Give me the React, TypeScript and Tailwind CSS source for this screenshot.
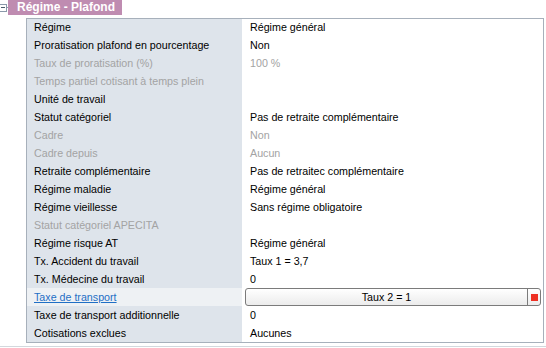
type Row = {
  label: string;
  value?: string;
  dim?: boolean;
  link?: boolean;
  button?: boolean;
};

const rows: Row[] = [
  { label: "Régime", value: "Régime général" },
  { label: "Proratisation plafond en pourcentage", value: "Non" },
  { label: "Taux de proratisation (%)", value: "100 %", dim: true },
  { label: "Temps partiel cotisant à temps plein", dim: true },
  { label: "Unité de travail" },
  { label: "Statut catégoriel", value: "Pas de retraite complémentaire" },
  { label: "Cadre", value: "Non", dim: true },
  { label: "Cadre depuis", value: "Aucun", dim: true },
  { label: "Retraite complémentaire", value: "Pas de retraitec complémentaire" },
  { label: "Régime maladie", value: "Régime général" },
  { label: "Régime vieillesse", value: "Sans régime obligatoire" },
  { label: "Statut catégoriel APECITA", dim: true },
  { label: "Régime risque AT", value: "Régime général" },
  { label: "Tx. Accident du travail", value: "Taux 1 = 3,7" },
  { label: "Tx. Médecine du travail", value: "0" },
  { label: "Taxe de transport", value: "Taux 2 = 1", link: true, button: true },
  { label: "Taxe de transport additionnelle", value: "0" },
  { label: "Cotisations exclues", value: "Aucunes" },
];

export default function App() {
  return (
    <div className="relative w-[546px] h-[348px] bg-white overflow-hidden font-['Liberation_Sans',Arial,sans-serif] text-[10.7px] text-black">
      {/* Section header */}
      <div className="flex items-start h-[15px]">
        <div className="flex items-center h-[15px]">
          <div className="w-[7px] h-[8px] border border-l-0 border-[#8a99aa] bg-white flex items-center">
            <div className="w-[4px] h-px bg-[#4a5a6a] ml-px" />
          </div>
          <div className="w-[1px] h-px bg-[#8a99aa]" />
        </div>
        <div className="h-[15px] w-[114px] bg-[#bf8cb1] text-white font-bold text-[12px] leading-[15px] pl-[9px]">
          Régime - Plafond
        </div>
      </div>

      {/* Property grid */}
      <div className="ml-[26px] mt-[3px] w-[518px] border border-[#a7b0bb] bg-white">
        {rows.map((row, i) => (
          <div key={i} className={`flex ${i === 0 ? "h-[17px]" : "h-[18px]"}`}>
            <div
              className={`w-[215px] shrink-0 pl-[7px] flex items-center ${
                row.link ? "bg-[#eef1f4]" : "bg-[#dee4eb]"
              }`}
            >
              {row.link ? (
                <span className="text-[#1f6fc5] underline">{row.label}</span>
              ) : (
                <span className={row.dim ? "text-[#a3a3a3]" : ""}>{row.label}</span>
              )}
            </div>
            {row.button ? (
              <div className="flex-1 flex items-center pl-[3px] pr-[2px]">
                <div className="flex w-full h-[18px] border border-[#7b7b7b] rounded-[3px] bg-gradient-to-b from-white to-[#ececec]">
                  <div className="flex-1 flex items-center justify-center border-r border-[#7b7b7b]">
                    Taux 2 = 1
                  </div>
                  <div className="w-[12px] flex items-center justify-center">
                    <div className="w-[7px] h-[7px] bg-[#ee3124]" />
                  </div>
                </div>
              </div>
            ) : (
              <div className={`flex-1 flex items-center pl-[8px] ${row.dim ? "text-[#a3a3a3]" : ""}`}>
                {row.value}
              </div>
            )}
          </div>
        ))}
      </div>

      {/* Splitter */}
      <div className="mt-[3px] h-px bg-[#d3d8dd]" />
      <div className="ml-[215px] mt-px w-[82px] border-t border-dotted border-[#8f99a4]" />
    </div>
  );
}
